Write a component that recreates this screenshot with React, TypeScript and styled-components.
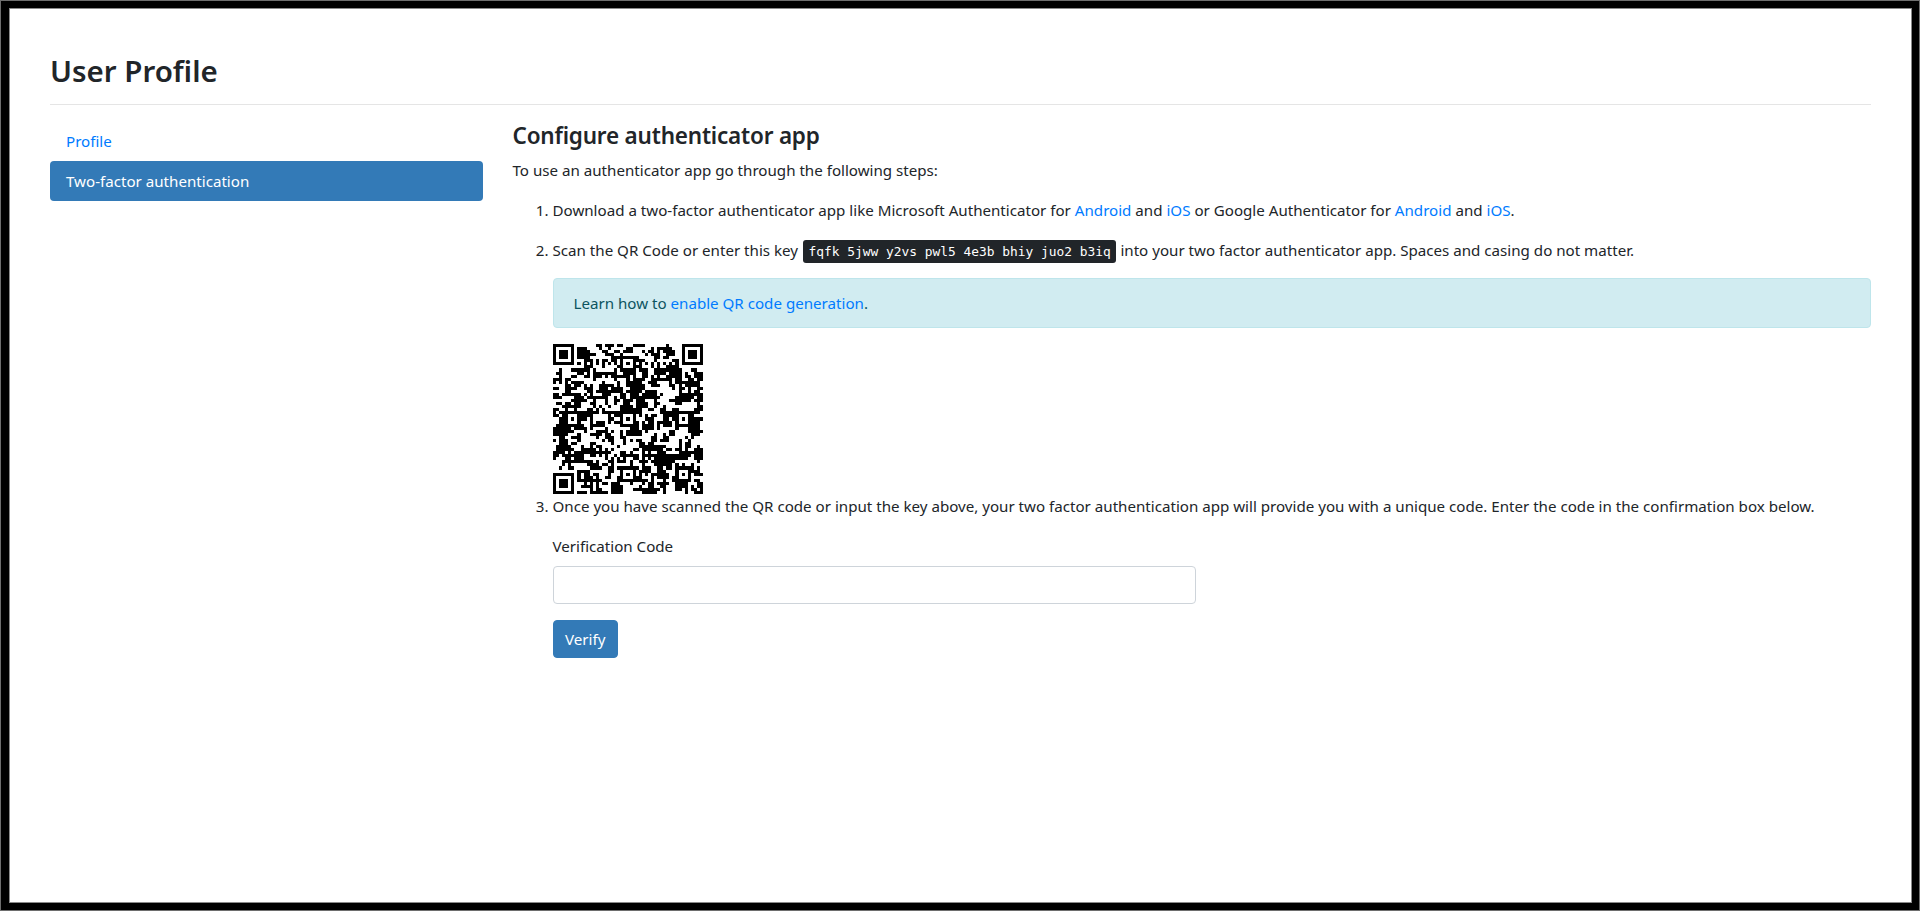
import styled, { createGlobalStyle } from 'styled-components';

const GlobalStyle = createGlobalStyle`
    html, body { margin: 0; padding: 0; }
    body {
        font-family: "Noto Sans", "Open Sans", sans-serif;
        font-size: 15.13px;
        line-height: 24px;
        color: #212529;
        background: #000;
    }
    * { box-sizing: border-box; }
`;

const Frame = styled.div`
    height: 911px;
    background: #fff;
    border: 8px solid #000;
    border-left-width: 9px;
    box-shadow: inset 0 0 0 1px #8a8a8a;
    outline: 1px solid #6e6e6e;
    outline-offset: -1px;
    padding: 44px 41px 0;
`;

const Title = styled.h1`
    margin: 0 0 14px;
    font-size: 29.5px;
    line-height: 38px;
    font-weight: 600;
`;

const Rule = styled.hr`
    margin: 0 0 16px;
    border: 0;
    border-top: 1px solid #e5e5e5;
`;

const Columns = styled.div`
    display: grid;
    grid-template-columns: 432.5px 1fr;
    column-gap: 30px;
`;

const Nav = styled.nav`
    display: flex;
    flex-direction: column;
`;

const NavLink = styled.a<{ $active?: boolean }>`
    display: block;
    height: 40px;
    padding: 8px 16px;
    border-radius: 4px;
    text-decoration: none;
    color: ${({ $active }) => ($active ? '#fff' : '#007bff')};
    background: ${({ $active }) => ($active ? '#337ab7' : 'transparent')};
`;

const Heading = styled.h4`
    margin: 0 0 8px;
    font-size: 22.5px;
    line-height: 29px;
    font-weight: 600;
    letter-spacing: -0.2px;
`;

const Text = styled.p`
    margin: 0 0 16px;
`;

const Steps = styled.ol`
    margin: 0;
    padding-left: 40px;
`;

const Link = styled.a`
    color: #007bff;
    text-decoration: none;
`;

const Key = styled.kbd`
    margin-left: 1px;
    padding: 4px 5.6px;
    border-radius: 3px;
    background: #212529;
    color: #fff;
    font-family: "DejaVu Sans Mono", "Liberation Mono", monospace;
    font-size: 12.88px;
    font-weight: 400;
    line-height: 1;
`;

const Alert = styled.div`
    height: 50px;
    margin-bottom: 16px;
    padding: 12px 20px;
    background: #d1ecf1;
    border: 1px solid #bee5eb;
    border-radius: 4px;
    color: #0c5460;
`;

const QrImage = styled.svg`
    display: block;
    width: 150px;
    height: 150px;
`;

const Field = styled.div`
    width: 643px;
    margin-bottom: 16px;
`;

const Label = styled.label`
    display: block;
    margin-bottom: 8px;
`;

const Input = styled.input`
    display: block;
    width: 100%;
    height: 38px;
    padding: 6px 12px;
    background: #fff;
    border: 1px solid #ced4da;
    border-radius: 4px;
    font: inherit;
`;

const Button = styled.button`
    display: block;
    height: 38px;
    padding: 0 11.5px;
    background: #337ab7;
    border: 1px solid #337ab7;
    border-radius: 4px;
    color: #fff;
    font: inherit;
`;

// version 8 symbol, 49 modules a side
const SIZE = 49;

function buildQrPath() {
    const grid: boolean[][] = Array.from({ length: SIZE }, () => Array(SIZE).fill(false));
    const fixed: boolean[][] = Array.from({ length: SIZE }, () => Array(SIZE).fill(false));

    const put = (x: number, y: number, on: boolean) => {
        if (x < 0 || y < 0 || x >= SIZE || y >= SIZE) return;
        grid[y][x] = on;
        fixed[y][x] = true;
    };

    const finder = (ox: number, oy: number) => {
        for (let y = -1; y <= 7; y++) {
            for (let x = -1; x <= 7; x++) {
                const inside = x >= 0 && x <= 6 && y >= 0 && y <= 6;
                const ring = x === 0 || x === 6 || y === 0 || y === 6;
                const core = x >= 2 && x <= 4 && y >= 2 && y <= 4;
                put(ox + x, oy + y, inside && (ring || core));
            }
        }
    };
    finder(0, 0);
    finder(SIZE - 7, 0);
    finder(0, SIZE - 7);

    const centres = [6, 24, 42];
    centres.forEach((cy) =>
        centres.forEach((cx) => {
            if ((cx === 6 && cy === 6) || (cx === 42 && cy === 6) || (cx === 6 && cy === 42)) return;
            for (let y = -2; y <= 2; y++) {
                for (let x = -2; x <= 2; x++) {
                    put(cx + x, cy + y, Math.max(Math.abs(x), Math.abs(y)) !== 1);
                }
            }
        }),
    );

    for (let i = 8; i < SIZE - 8; i++) {
        if (!fixed[6][i]) put(i, 6, i % 2 === 0);
        if (!fixed[i][6]) put(6, i, i % 2 === 0);
    }

    // data area: a fixed seed, so the picture is the same on every run
    let seed = 20240611;
    const next = () => {
        seed = (seed * 1664525 + 1013904223) >>> 0;
        return seed / 4294967296;
    };
    for (let y = 0; y < SIZE; y++) {
        for (let x = 0; x < SIZE; x++) {
            if (fixed[y][x]) continue;
            const left = x > 0 ? grid[y][x - 1] : false;
            const up = y > 0 ? grid[y - 1][x] : false;
            const chance = 0.32 + (left ? 0.2 : 0) + (up ? 0.2 : 0);
            grid[y][x] = next() < chance;
        }
    }

    let d = '';
    grid.forEach((row, y) =>
        row.forEach((on, x) => {
            if (on) d += `M${x} ${y}h1v1h-1z`;
        }),
    );
    return d;
}

const qrPath = buildQrPath();

export default function App() {
    return (
        <>
            <GlobalStyle />
            <Frame>
                <Title>User Profile</Title>
                <Rule />
                <Columns>
                    <Nav>
                        <NavLink href="#">Profile</NavLink>
                        <NavLink href="#" $active>
                            Two-factor authentication
                        </NavLink>
                    </Nav>
                    <main>
                        <Heading>Configure authenticator app</Heading>
                        <Text>To use an authenticator app go through the following steps:</Text>
                        <Steps>
                            <li>
                                <Text>
                                    Download a two-factor authenticator app like Microsoft Authenticator for <Link href="#">Android</Link> and{' '}
                                    <Link href="#">iOS</Link> or Google Authenticator for <Link href="#">Android</Link> and <Link href="#">iOS</Link>.
                                </Text>
                            </li>
                            <li>
                                <Text>
                                    Scan the QR Code or enter this key <Key>fqfk 5jww y2vs pwl5 4e3b bhiy juo2 b3iq</Key> into your two factor
                                    authenticator app. Spaces and casing do not matter.
                                </Text>
                                <Alert>
                                    Learn how to <Link href="#">enable QR code generation</Link>.
                                </Alert>
                                <QrImage viewBox={`0 0 ${SIZE} ${SIZE}`} shapeRendering="crispEdges" role="img" aria-label="QR code">
                                    <path d={qrPath} fill="#000" />
                                </QrImage>
                            </li>
                            <li>
                                <Text>
                                    Once you have scanned the QR code or input the key above, your two factor authentication app will provide you
                                    with a unique code. Enter the code in the confirmation box below.
                                </Text>
                                <form>
                                    <Field>
                                        <Label>Verification Code</Label>
                                        <Input type="text" autoComplete="off" />
                                    </Field>
                                    <Button type="button">Verify</Button>
                                </form>
                            </li>
                        </Steps>
                    </main>
                </Columns>
            </Frame>
        </>
    );
}
